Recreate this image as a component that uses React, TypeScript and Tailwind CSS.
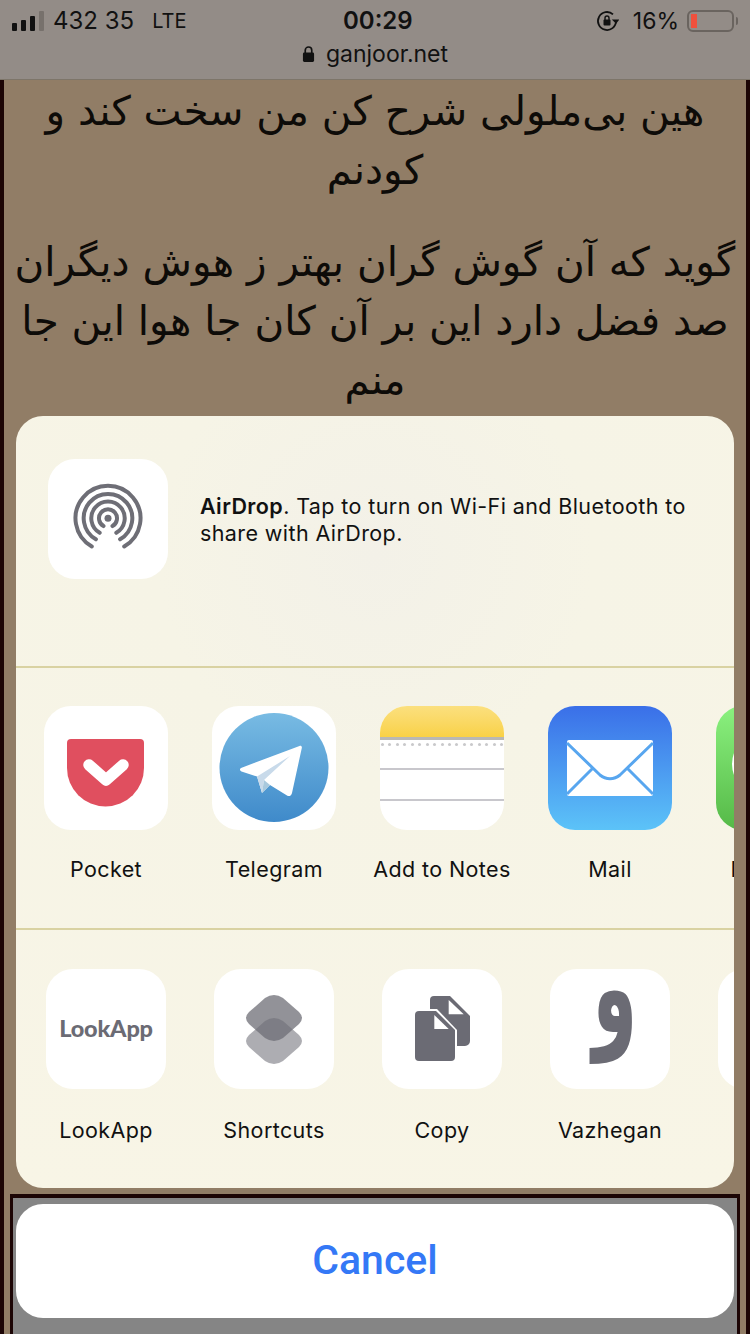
import React from "react";

const uiFont = "font-['Inter','Noto_Sans',sans-serif]";

const PocketIcon = () => (
  <svg viewBox="0 0 124 124" className="w-full h-full">
    <path d="M23 37a4 4 0 0 1 4-4h69a4 4 0 0 1 4 4v25a38.500 38.500 0 0 1-77 0z" fill="#e04f5f" />
    <path d="M45 59l17 15 17-15" fill="none" stroke="#fff" strokeWidth="11.500" strokeLinecap="round" strokeLinejoin="round" />
  </svg>
);

const TelegramIcon = () => (
  <svg viewBox="0 0 124 124" className="w-full h-full">
    <defs>
      <linearGradient id="tg" x1="0" y1="0" x2="0" y2="1">
        <stop offset="0" stopColor="#78bbe3" />
        <stop offset="1" stopColor="#3f8aca" />
      </linearGradient>
    </defs>
    <circle cx="62" cy="61.500" r="54.500" fill="url(#tg)" />
    <path d="M29 62L87.500 40c1.500-.5 2.700.4 2.300 2L80 87c-.6 3-3 3.800-5 2.500L58 79l-8 8-5-16.500-15.500-5c-2-.7-2-2.800-.5-3.500z" fill="#fff" />
    <path d="M78 50L45 70.500 50 87l2-13z" fill="#c8daea" />
    <path d="M50 87l8-8-6-5z" fill="#a9c9dd" />
  </svg>
);

const NotesIcon = () => (
  <div className="w-full h-full flex flex-col bg-white">
    <div className="h-[31px] bg-gradient-to-b from-[#fbe07e] to-[#f9d145]" />
    <div className="h-[3px] bg-[#b9b8b4]" />
    <div className="h-[9px] flex items-center justify-between px-[1px]">
      {Array.from({ length: 17 }).map((_, i) => (
        <span key={i} className="w-[3px] h-[3px] rounded-full bg-[#c9c9cb]" />
      ))}
    </div>
    <div className="h-[2px] mt-[19px] bg-[#c8c7cc]" />
    <div className="h-[2px] mt-[29px] bg-[#c8c7cc]" />
  </div>
);

const MailIcon = () => (
  <svg viewBox="0 0 124 124" className="w-full h-full">
    <defs>
      <linearGradient id="mail" x1="0" y1="0" x2="0" y2="1">
        <stop offset="0" stopColor="#3a6fe8" />
        <stop offset="1" stopColor="#5cc3f8" />
      </linearGradient>
    </defs>
    <rect width="124" height="124" fill="url(#mail)" />
    <rect x="19" y="34" width="86" height="56" rx="2" fill="#fff" />
    <path d="M19 37l33 32c6 5 14 5 20 0l33-32M45 62L19 88M79 62l26 26" fill="none" stroke="#58a6ef" strokeWidth="3" />
  </svg>
);

const MessagesIcon = () => (
  <svg viewBox="0 0 124 124" className="w-full h-full">
    <defs>
      <linearGradient id="msg" x1="0" y1="0" x2="0" y2="1">
        <stop offset="0" stopColor="#8bf17f" />
        <stop offset="1" stopColor="#55b947" />
      </linearGradient>
    </defs>
    <rect width="124" height="124" fill="url(#msg)" />
    <ellipse cx="62" cy="58" rx="46" ry="38" fill="#fff" />
  </svg>
);

const AirDropIcon = () => (
  <svg viewBox="0 0 120 120" className="w-full h-full" fill="none" stroke="#6e6e76" strokeWidth="4" strokeLinecap="round">
    <circle cx="60" cy="59.300" r="3.500" fill="#6e6e76" stroke="none" />
    <path d="M55.500 67.100A9 9 0 1 1 64.500 67.100" />
    <path d="M51.700 73.800A16.700 16.700 0 1 1 68.300 73.800" />
    <path d="M47.900 80.300A24.300 24.300 0 1 1 72.100 80.300" />
    <path d="M43.800 87.500A32.500 32.500 0 1 1 76.200 87.500" />
  </svg>
);

const ShortcutsIcon = () => (
  <svg viewBox="0 0 120 120" className="w-full h-full">
    <path d="M51 52Q60 46 69 52L85 66Q91 72 85 78L69 92Q60 98 51 92L35 78Q29 72 35 66Z" fill="#adadb2" />
    <path d="M51 29Q60 23 69 29L85 43Q91 49 85 55L69 69Q60 75 51 69L35 55Q29 49 35 43Z" fill="#6e6e76" fillOpacity="0.75" />
  </svg>
);

const CopyIcon = () => (
  <svg viewBox="0 0 120 120" className="w-full h-full">
    <path d="M52 27H68L88 47V72a5 5 0 0 1-5 5H52a4 4 0 0 1-4-4V31a4 4 0 0 1 4-4z" fill="#6b6b74" />
    <path d="M66.700 31L81.700 45.300H66.700z" fill="#fff" />
    <path d="M36 40H55L75 61V88a6 6 0 0 1-6 6H36a5 5 0 0 1-5-5V45a5 5 0 0 1 5-5z" fill="#fff" />
    <path d="M37 42H54L73 61V88a4 4 0 0 1-4 4H37a4 4 0 0 1-4-4V46a4 4 0 0 1 4-4z" fill="#6b6b74" />
    <path d="M52.300 46L66.700 60H52.300z" fill="#fff" />
  </svg>
);

const AppTile = ({ label, size, gap, children }: { label?: string; size: string; gap: string; children: React.ReactNode }) => (
  <div className="w-[168px] shrink-0 flex flex-col items-center">
    <div className={`${size} rounded-[27px] bg-white overflow-hidden shrink-0 flex items-center justify-center`}>
      {children}
    </div>
    {label && <span className={`${gap} text-[21.5px] leading-[26px] text-[#111] tracking-[0.4px] whitespace-nowrap`}>{label}</span>}
  </div>
);

export default function App() {
  const big = "w-[124px] h-[124px]";
  const small = "w-[120px] h-[120px]";
  return (
    <div className="relative w-[750px] h-[1334px] overflow-hidden bg-[#917d66] flex flex-col">
      <div className={`h-[80px] shrink-0 bg-[#938c87] border-b border-[#7d7569] flex flex-col text-[#111] ${uiFont}`}>
        <div className="h-[42px] pl-[12px] pr-[12px] flex items-center justify-between relative">
          <div className="flex items-center text-[24px]">
            <div className="flex items-end gap-[4px] h-[20px] mr-[9px]">
              <span className="w-[5px] h-[8px] rounded-[1px] bg-[#111]" />
              <span className="w-[5px] h-[11px] rounded-[1px] bg-[#111]" />
              <span className="w-[5px] h-[15px] rounded-[1px] bg-[#111]" />
              <span className="w-[5px] h-[20px] rounded-[1px] bg-[#77716c]" />
            </div>
            <span>432 35</span>
            <span className="ml-[18px] text-[20px]">LTE</span>
          </div>
          <span className="absolute left-[343px] text-[24px] font-semibold">00:29</span>
          <div className="flex items-center text-[23px]">
            <svg viewBox="0 0 24 24" className="w-[24px] h-[24px] mr-[14px]" fill="none" stroke="#111" strokeWidth="1.800">
              <path d="M21 12a9 9 0 1 1-3-6.700" />
              <path d="M22.500 11.500l-1.500 2-2-2z" fill="#111" />
              <rect x="8.500" y="10.500" width="7" height="6" rx="1" fill="#111" stroke="none" />
              <path d="M10 11V9a2 2 0 0 1 4 0v2" strokeWidth="1.400" />
            </svg>
            <span>16%</span>
            <div className="ml-[8px] mr-[2px] w-[47px] h-[22px] rounded-[6px] border-2 border-[#6a645f] p-[2px]">
              <div className="w-[6px] h-full bg-[#f0503c]" />
            </div>
            <span className="w-[2px] h-[8px] bg-[#6a645f] rounded-r-sm" />
          </div>
        </div>
        <div className="flex items-center justify-center gap-[11px] mt-[-1px] text-[23px] leading-[26px]">
          <svg viewBox="0 0 14 18" className="w-[13px] h-[18px]">
            <path d="M3.500 8V5a3.500 3.500 0 0 1 7 0v3" fill="none" stroke="#111" strokeWidth="1.800" />
            <rect x="1" y="7.500" width="12" height="10" rx="1.500" fill="#111" />
          </svg>
          <span>ganjoor.net</span>
        </div>
      </div>

      <div dir="rtl" className="flex-1 border-x-4 border-[#1c0505] px-[4px] pt-[2px] text-center text-[40.5px] leading-[59px] text-[#0d0b08] font-['DejaVu_Sans',sans-serif]">
        <p className="mb-[33px]">هین بی‌ملولی شرح کن من سخت کند و کودنم</p>
        <p>گوید که آن گوش گران بهتر ز هوش دیگران صد فضل دارد این بر آن کان جا هوا این جا منم</p>
      </div>

      <div className="absolute left-[10px] right-[10px] top-[1194px] bottom-0 border-x-[3px] border-t-4 border-[#1c0505] bg-[#858585]" />

      <div className={`absolute left-[16px] top-[416px] w-[718px] h-[772px] rounded-[27px] overflow-hidden bg-[radial-gradient(circle_at_50%_18%,#f3f1e8_0%,#f6f4e6_30%,#f8f5e6_100%)] flex flex-col ${uiFont}`}>
        <div className="h-[252px] shrink-0 flex pl-[32px] pt-[43px] border-b-2 border-[#d9d2a2]">
          <div className={`${small} rounded-[27px] bg-white shrink-0`}>
            <AirDropIcon />
          </div>
          <p className="ml-[32px] mt-[34px] w-[510px] text-[21.5px] leading-[27px] tracking-[0.4px] text-[#111]">
            <b className="font-semibold">AirDrop</b>. Tap to turn on Wi-Fi and Bluetooth to share with AirDrop.
          </p>
        </div>
        <div className="h-[262px] shrink-0 flex pl-[6px] pt-[38px] border-b-2 border-[#d9d2a2]">
          <AppTile label="Pocket" size={big} gap="mt-[26px]"><PocketIcon /></AppTile>
          <AppTile label="Telegram" size={big} gap="mt-[26px]"><TelegramIcon /></AppTile>
          <AppTile label="Add to Notes" size={big} gap="mt-[26px]"><NotesIcon /></AppTile>
          <AppTile label="Mail" size={big} gap="mt-[26px]"><MailIcon /></AppTile>
          <AppTile label="Message" size={big} gap="mt-[26px]"><MessagesIcon /></AppTile>
        </div>
        <div className="flex pl-[6px] pt-[39px]">
          <AppTile label="LookApp" size={small} gap="mt-[28px]">
            <span className="text-[23.5px] font-black text-[#6b6b74] tracking-[-0.2px] font-['Lato',sans-serif]">LookApp</span>
          </AppTile>
          <AppTile label="Shortcuts" size={small} gap="mt-[28px]"><ShortcutsIcon /></AppTile>
          <AppTile label="Copy" size={small} gap="mt-[28px]"><CopyIcon /></AppTile>
          <AppTile label="Vazhegan" size={small} gap="mt-[28px]">
            <span className="text-[72px] leading-[20px] font-bold text-[#6b6b74] font-['DejaVu_Sans',sans-serif] scale-y-[1.8] translate-x-[5px] -translate-y-[42px]">و</span>
          </AppTile>
          <AppTile size={small} gap="mt-[28px]"><span /></AppTile>
        </div>
      </div>

      <div className="absolute left-[16px] top-[1204px] w-[718px] h-[114px] rounded-[27px] bg-white flex items-center justify-center">
        <span className="text-[41px] font-medium text-[#3478f6] font-['Roboto',sans-serif]">Cancel</span>
      </div>
    </div>
  );
}
